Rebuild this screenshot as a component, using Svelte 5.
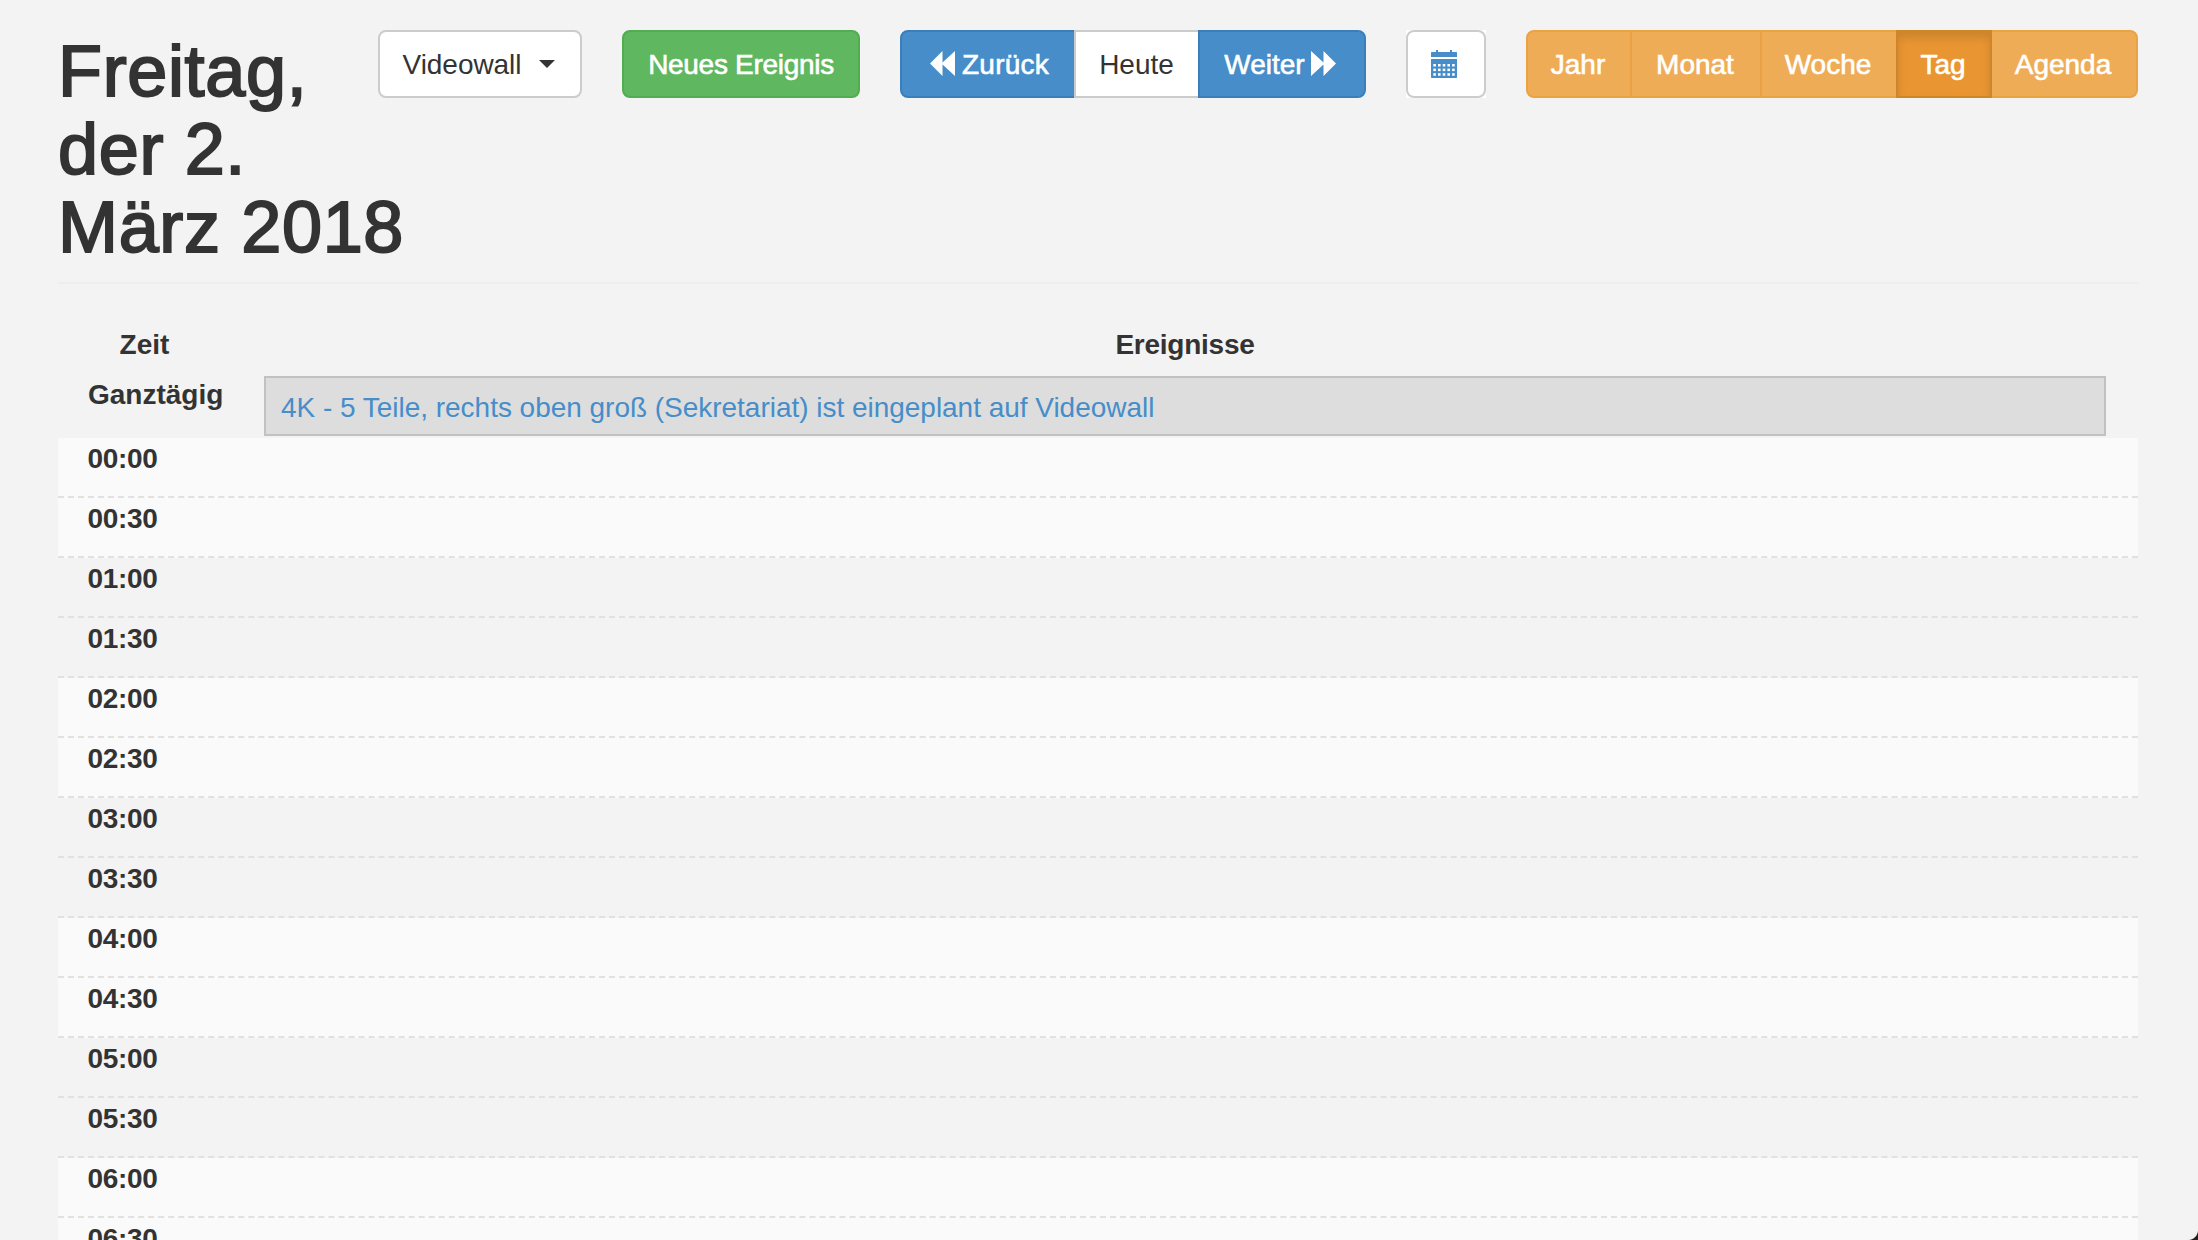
<script>
  const slots = Array.from({ length: 14 }, (_, i) => ({
    label: `${String(Math.floor(i / 2)).padStart(2, '0')}:${i % 2 ? '30' : '00'}`,
    light: Math.floor(i / 2) % 2 === 0
  }));
  const views = ['Jahr', 'Monat', 'Woche', 'Tag', 'Agenda'];
  const active = 'Tag';
  const holes = [0, 1, 2].flatMap((r) => [0, 1, 2, 3, 4].map((c) => ({ x: 2.3 + c * 4.7, y: 14 + r * 4.6 })));
</script>

<div class="page">
  <header>
    <h1>Freitag,<br />der 2.<br />März 2018</h1>
    <div class="toolbar">
      <button class="btn plain wall"><span>Videowall</span><i class="caret"></i></button>
      <button class="btn green"><span>Neues Ereignis</span></button>
      <div class="group">
        <button class="btn blue prev">
          <svg width="25" height="26" viewBox="0 0 25 26"><path d="M0 12.5 12.5 0V11.5L25 0V25L12.5 13.5V25Z" fill="#fff" /></svg>
          <span>Zurück</span>
        </button>
        <button class="btn plain today"><span>Heute</span></button>
        <button class="btn blue next">
          <span>Weiter</span>
          <svg width="25" height="26" viewBox="0 0 25 26"><path d="M25 12.5 12.5 0V11.5L0 0V25L12.5 13.5V25Z" fill="#fff" /></svg>
        </button>
      </div>
      <div class="picker">
        <button class="btn plain cal" aria-label="Kalender">
          <svg width="26" height="28" viewBox="0 0 26 28">
            <path d="M5 0h2v2h12V0h2v2h4.300q.7 0 .7.700V7H0V2.700Q0 2 .7 2H5ZM0 9h26v18.300q0 .7-.7.700H.7q-.7 0-.7-.7Z" fill="#468dc9" />
            {#each holes as h}<rect x={h.x} y={h.y} width="2.600" height="2.500" fill="#fff" />{/each}
          </svg>
        </button>
      </div>
      <div class="group">
        {#each views as v}
          <button class="btn orange {v.toLowerCase()}" class:active={v === active}><span>{v}</span></button>
        {/each}
      </div>
    </div>
  </header>

  <div class="row head"><b class="zeit">Zeit</b><b class="events">Ereignisse</b></div>
  <div class="row allday">
    <b>Ganztägig</b>
    <div class="event"><a href="#event">4K - 5 Teile, rechts oben groß (Sekretariat) ist eingeplant auf Videowall</a></div>
  </div>
  {#each slots as s}
    <div class="slot" class:light={s.light}><b>{s.label}</b></div>
  {/each}
  <div class="corner"></div>
</div>

<style>
  :global(body) {
    background: #f3f3f3;
    overflow: hidden;
  }
  .page {
    position: relative;
    box-sizing: border-box;
    height: 1240px;
    overflow: hidden;
    padding: 0 60px 0 58px;
    background: #f3f3f3;
    color: #333;
    font: 28px/42px 'Liberation Sans', Arial, sans-serif;
  }
  header {
    display: flex;
    justify-content: space-between;
    align-items: flex-start;
    box-sizing: border-box;
    height: 284px;
    border-bottom: 2px solid #eee;
  }
  h1 {
    margin: 32px 0 0;
    font-size: 72px;
    line-height: 78px;
    font-weight: 400;
    letter-spacing: 0.65px;
    white-space: nowrap;
    -webkit-text-stroke: 2px #333;
  }
  .toolbar {
    position: absolute;
    top: 30px;
    right: 60px;
    display: flex;
    gap: 40px;
  }
  .group {
    display: flex;
  }
  .btn {
    display: flex;
    align-items: center;
    justify-content: center;
    box-sizing: border-box;
    height: 68px;
    margin: 0;
    padding: 0 1px 0 0;
    border: 2px solid;
    border-radius: 8px;
    font: inherit;
    white-space: nowrap;
    color: #fff;
  }
  .btn span { padding-top: 2px; }
  .group .btn:not(:first-child) {
    border-top-left-radius: 0;
    border-bottom-left-radius: 0;
    margin-left: -2px;
  }
  .group .btn:not(:last-child) {
    border-top-right-radius: 0;
    border-bottom-right-radius: 0;
  }
  .plain { background: #fff; border-color: #ccc; color: #333; }
  .green { width: 238px; padding: 0; letter-spacing: -0.3px; background: #5fb760; border-color: #50ad50; -webkit-text-stroke: 0.6px #fff; }
  .blue { background: #468dc9; border-color: #397fbc; -webkit-text-stroke: 0.6px #fff; }
  .orange { padding-right: 2px; background: #efac57; border-color: #eba243; -webkit-text-stroke: 0.6px #fff; }
  .orange.active {
    position: relative;
    background: #e99632;
    border-color: #d08529;
    box-shadow: inset 0 6px 10px rgba(0, 0, 0, 0.125);
  }
  .wall { width: 204px; gap: 18px; padding-right: 2px; }
  .wall span { letter-spacing: -0.05px; }
  .prev { width: 176px; gap: 7px; padding: 0 0 0 3px; }
  .prev span { letter-spacing: 0.25px; }
  .today { position: relative; width: 126px; }
  .next { position: relative; width: 168px; gap: 6px; padding-right: 4px; }
  .picker { background: #fff; }
  .cal { width: 80px; padding-right: 4px; }
  .jahr { width: 106px; }
  .monat { width: 132px; }
  .woche { width: 138px; }
  .tag { width: 96px; }
  .agenda { width: 148px; }
  .caret {
    border-top: 8px solid #333;
    border-left: 8px solid transparent;
    border-right: 8px solid transparent;
  }
  .row {
    display: flex;
    justify-content: space-between;
    padding: 0 32px 0 30px;
  }
  .head { padding-top: 40px; height: 52px; }
  .head b { text-align: center; }
  .head .zeit { width: 113px; }
  .head .events { width: 1842px; letter-spacing: -0.25px; }
  .allday { height: 62px; line-height: 38px; }
  .event {
    box-sizing: border-box;
    width: 1842px;
    height: 60px;
    padding: 11px 15px;
    border: 2px solid #c1c1c1;
    background: #ddd;
  }
  .event a { color: #468dc9; text-decoration: none; letter-spacing: -0.025px; }
  .slot {
    box-sizing: border-box;
    height: 60px;
    padding-left: 29.500px;
    border-bottom: 2px dashed #e1e1e1;
    letter-spacing: -0.3px;
  }
  .light { background: #fafafa; }
  .corner {
    position: absolute;
    right: 0;
    bottom: 0;
    width: 10px;
    height: 10px;
    background: radial-gradient(circle at 0 0, transparent 9.500px, #231f1e 10.500px);
  }
</style>
